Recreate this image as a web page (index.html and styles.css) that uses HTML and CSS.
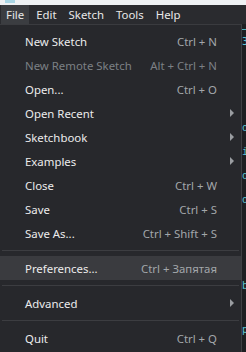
FILE: index.html
```html
<!DOCTYPE html>
<html lang="en">
<head>
  <meta charset="UTF-8" />
  <title>File menu</title>
  <link rel="stylesheet" href="styles.css">
</head>
<body>
  <div class="titlebar"><span class="app-icon"></span></div>

  <nav class="menubar">
    <span class="menubar-item active">File</span>
    <span class="menubar-item">Edit</span>
    <span class="menubar-item">Sketch</span>
    <span class="menubar-item">Tools</span>
    <span class="menubar-item">Help</span>
  </nav>

  <div class="workspace">
    <ul class="menu">
      <li class="menu-item"><span class="label">New Sketch</span><span class="shortcut">Ctrl + N</span><span class="sub"></span></li>
      <li class="menu-item disabled"><span class="label">New Remote Sketch</span><span class="shortcut">Alt + Ctrl + N</span><span class="sub"></span></li>
      <li class="menu-item"><span class="label">Open...</span><span class="shortcut">Ctrl + O</span><span class="sub"></span></li>
      <li class="menu-item"><span class="label">Open Recent</span><span class="sub"><i class="arrow"></i></span></li>
      <li class="menu-item"><span class="label">Sketchbook</span><span class="sub"><i class="arrow"></i></span></li>
      <li class="menu-item"><span class="label">Examples</span><span class="sub"><i class="arrow"></i></span></li>
      <li class="menu-item"><span class="label">Close</span><span class="shortcut">Ctrl + W</span><span class="sub"></span></li>
      <li class="menu-item"><span class="label">Save</span><span class="shortcut">Ctrl + S</span><span class="sub"></span></li>
      <li class="menu-item"><span class="label">Save As...</span><span class="shortcut">Ctrl + Shift + S</span><span class="sub"></span></li>
      <li class="separator"></li>
      <li class="menu-item hover"><span class="label">Preferences...</span><span class="shortcut">Ctrl + Запятая</span><span class="sub"></span></li>
      <li class="separator"></li>
      <li class="menu-item"><span class="label">Advanced</span><span class="sub"><i class="arrow"></i></span></li>
      <li class="separator"></li>
      <li class="menu-item"><span class="label">Quit</span><span class="shortcut">Ctrl + Q</span><span class="sub"></span></li>
    </ul>

    <!-- editor behind the menu, only a sliver shows -->
    <div class="editor">
      <div class="editor-line"></div>
      <span class="code c1">3</span>
      <span class="code c2">o</span>
      <span class="code c3">i</span>
      <span class="code c4">o</span>
      <span class="code c5">o</span>
      <span class="code c6">b</span>
      <span class="code c7">p</span>
    </div>
  </div>
</body>
</html>
```

FILE: styles.css
```css
body {
  font-family: 'Noto Sans', 'Open Sans', sans-serif;
  font-size: 11.4px;
  margin: 0;
  width: 246px;
  height: 352px;
  overflow: hidden;
  background: #1f2023;
  color: #e6e6e6;
}
.titlebar {
  height: 5px;
  background: #eef1f4;
  position: relative;
}
.app-icon {
  position: absolute;
  left: 5px; top: 0;
  width: 10px; height: 3px;
  background: #a9d6e5;
}
.menubar {
  height: 19px;
  display: flex;
  align-items: center;
  background: #2a2b2f;
  padding-left: 1px;
}
.menubar-item {
  padding: 0 5px;
  margin-right: 2px;
  line-height: 19px;
  color: #e8e8e8;
}
.menubar-item.active { background: #3b3d41; }

.workspace { display: flex; height: 328px; }
.menu {
  list-style: none;
  margin: 0;
  padding: 4px 0 0 0;
  width: 242px;
  box-sizing: border-box;
  background: #27282c;
  border-top: 1px solid #3a3b3f;
  border-right: 1px solid #3f4044;
  flex: none;
}
.menu-item {
  display: flex;
  align-items: center;
  height: 24px;
  padding-left: 25px;
}
.menu-item.hover { background: #3a3b3f; }
.menu-item .label { flex: 1; color: #ececec; }
.menu-item .shortcut { color: #a3a7ab; }
.menu-item.disabled .label,
.menu-item.disabled .shortcut { color: #7c8085; }
.sub { width: 24px; height: 24px; position: relative; flex: none; }
.arrow {
  position: absolute;
  left: 13px; top: 8px;
  width: 0; height: 0;
  border-top: 4px solid transparent;
  border-bottom: 4px solid transparent;
  border-left: 4px solid #9a9da1;
}
.separator {
  height: 1px;
  margin: 5px 2px;
  background: #3c3d41;
}

.editor { flex: 1; position: relative; background: #1e1f22; overflow: hidden; }
.editor-line { height: 1px; margin-top: 5px; background: #4fb3c0; }
.code {
  position: absolute;
  left: 0;
  font-family: 'DejaVu Sans Mono', monospace;
  font-size: 10px;
  line-height: 12px;
  color: #5ec5d4;
}
.c1 { top: 12px; }
.c2 { top: 98px; }
.c3 { top: 122px; }
.c4 { top: 146px; }
.c5 { top: 170px; }
.c6 { top: 256px; }
.c7 { top: 300px; }
```
